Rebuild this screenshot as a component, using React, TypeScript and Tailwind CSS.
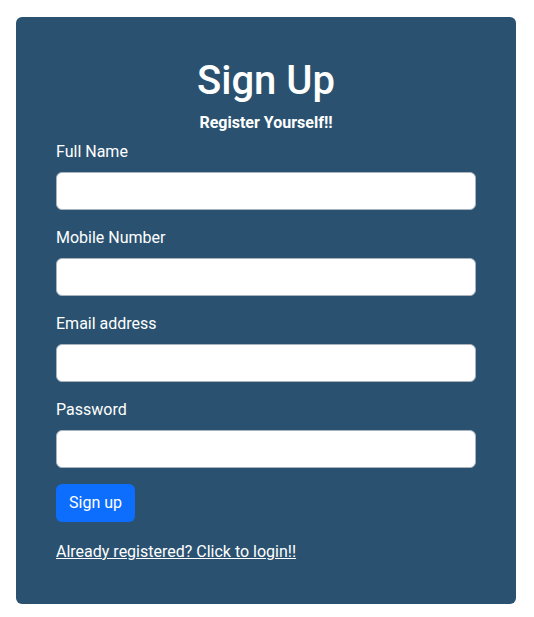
export default function App() {
  const fields = ["Full Name", "Mobile Number", "Email address", "Password"];
  return (
    <div className="min-h-screen bg-white pt-[17px] px-4 font-['Roboto',sans-serif] text-white">
      <div className="w-[500px] rounded-md bg-[#2a5270] px-10 pt-[40px] pb-[40px]">
        <h1 className="text-center text-[40px] font-medium leading-[1.2] mb-[6px]">Sign Up</h1>
        <p className="text-center font-bold text-base leading-6 mb-[5px]">Register Yourself!!</p>
        <form className="flex flex-col">
          {fields.map((f) => (
            <div key={f} className="mb-4">
              <label className="block text-base leading-6 mb-2">{f}</label>
              <input
                type={f === "Password" ? "password" : "text"}
                className="block w-full h-[38px] rounded-md border border-[#a9b3bd] bg-white px-3 text-black outline-none"
              />
            </div>
          ))}
          <div>
            <button
              type="button"
              className="h-[38px] rounded-md bg-[#0d6efd] px-[13px] text-base leading-6 text-white"
            >
              Sign up
            </button>
          </div>
          <a href="#" className="mt-[18px] underline text-base leading-6 text-white">
            Already registered? Click to login!!
          </a>
        </form>
      </div>
    </div>
  );
}
